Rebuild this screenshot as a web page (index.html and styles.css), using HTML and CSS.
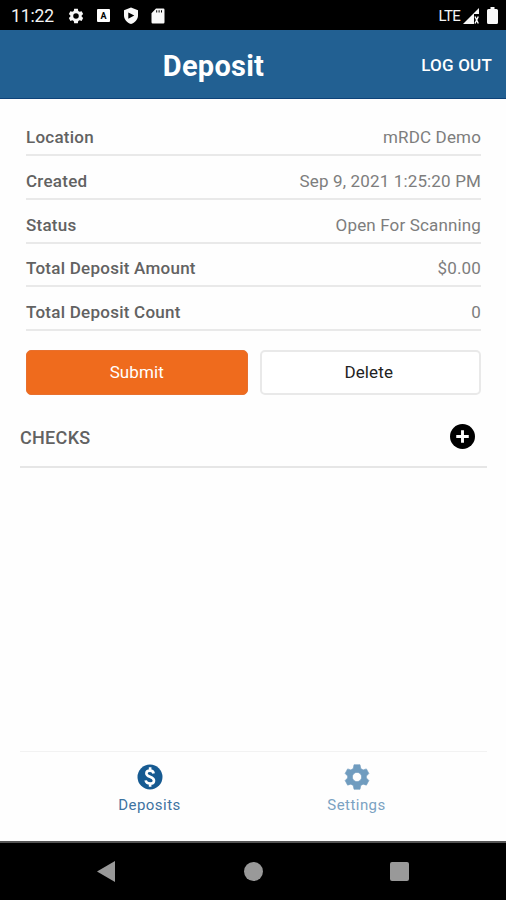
FILE: index.html
```html
<!DOCTYPE html>
<html lang="en">
<head>
<meta charset="utf-8">
<title>Deposit</title>
<link rel="stylesheet" href="styles.css">
</head>
<body>
<svg class="defs" width="0" height="0" aria-hidden="true">
  <symbol id="gear" viewBox="0 0 24 24"><path fill-rule="evenodd" d="M9.600 2.200H14.400L15 5.200 16.900 6.300 19.500 5.500 21.500 9.200 19.500 11.200V12.800L21.500 14.800 19.500 18.500 16.900 17.700 15 18.800 14.400 21.800H9.600L9 18.800 7.100 17.700 4.500 18.500 2.500 14.800 4.500 12.800V11.200L2.500 9.200 4.500 5.500 7.100 6.300 9 5.200ZM12 8.300a3.700 3.700 0 1 0 0 7.400 3.700 3.700 0 1 0 0-7.400Z" stroke-width=".5" stroke-linejoin="round"/></symbol>
</svg>
<div class="screen">
  <div class="status">
    <span class="time">11:22</span>
    <svg class="s-gear"><use href="#gear"/></svg>
    <svg class="s-a" viewBox="0 0 13 13"><rect width="13" height="13" rx="1" fill="#fff"/><text x="6.500" y="9.800" text-anchor="middle" class="a-letter">A</text></svg>
    <svg class="s-shield" viewBox="0 0 16 18"><path fill-rule="evenodd" d="M8 0.500 15 3.300V8.500C15 12.500 12 15.700 8 17 4 15.700 1 12.500 1 8.500V3.300ZM5.300 5.500V11.700L11.300 8.600Z"/></svg>
    <svg class="s-card" viewBox="0 0 14 16"><path fill-rule="evenodd" d="M5 .5H12.300Q13.500.5 13.500 1.700V14.300Q13.500 15.500 12.300 15.500H1.700Q.5 15.500.5 14.300V5.200ZM5.200 2.300V4.600H6.200V2.300ZM7.600 2.300V4.600H8.600V2.300ZM10 2.300V4.600H11V2.300Z"/></svg>
    <span class="lte">LTE</span>
    <svg class="s-signal" viewBox="0 0 16 16"><path d="M0 16 16 0V6H11V16Z"/><path d="M12 8.500 15.300 15.500M15.300 8.500 12 15.500" stroke="#fff" stroke-width="1.400"/></svg>
    <svg class="s-battery" viewBox="0 0 11 17"><path d="M3.500 0H7.500V2H9.500Q11 2 11 3.500V15.500Q11 17 9.500 17H1.500Q0 17 0 15.500V3.500Q0 2 1.500 2H3.500Z"/></svg>
  </div>
  <header class="bar">
    <h1 class="title">Deposit</h1>
    <span class="logout">LOG OUT</span>
  </header>
  <main class="main">
    <dl class="details">
      <div class="row"><dt>Location</dt><dd>mRDC Demo</dd></div>
      <div class="row"><dt>Created</dt><dd>Sep 9, 2021 1:25:20 PM</dd></div>
      <div class="row"><dt>Status</dt><dd>Open For Scanning</dd></div>
      <div class="row"><dt>Total Deposit Amount</dt><dd>$0.00</dd></div>
      <div class="row"><dt>Total Deposit Count</dt><dd>0</dd></div>
    </dl>
    <div class="actions">
      <button class="btn submit">Submit</button>
      <button class="btn delete">Delete</button>
    </div>
    <section class="checks">
      <h2>CHECKS</h2>
      <svg class="add" viewBox="0 0 24 24"><circle cx="12" cy="12" r="12"/><path d="M12 6V18M6 12H18" stroke="#fff" stroke-width="2.800"/></svg>
    </section>
  </main>
  <nav class="tabs">
    <div class="tab active"><svg viewBox="0 0 24 24"><circle cx="12" cy="12" r="10" stroke="none"/><path d="M14.900 9.200C14.700 7.600 13.700 6.900 12.100 6.900 10.300 6.900 9.100 7.800 9.100 9.100 9.100 12.400 15.200 11.100 15.200 14.900 15.200 16.300 14 17.200 12.100 17.200 10.100 17.200 8.800 16.300 8.500 14.700M12.100 4.200V7M12.100 17V19.800" fill="none" stroke="#fff" stroke-width="2.100"/></svg><span>Deposits</span></div>
    <div class="tab"><svg><use href="#gear"/></svg><span>Settings</span></div>
  </nav>
  <div class="system">
    <svg class="back" viewBox="0 0 18 21"><path d="M0 10.500 18 0V21Z"/></svg>
    <span class="home"></span>
    <span class="recent"></span>
  </div>
</div>
</body>
</html>
```
FILE: styles.css
```css
* { box-sizing: border-box; }
body { margin: 0; background: #fff; font-family: Roboto, "Liberation Sans", sans-serif; }
svg { display: block; flex: none; }
.defs { position: absolute; }
.screen { width: 506px; height: 900px; display: flex; flex-direction: column; overflow: hidden; background: #fefefe; }

.status { height: 30px; flex: none; display: flex; align-items: center; background: #000; color: #f4f4f4; fill: #f8f8f8; padding: 1px 8px 0 11px; }
.time { width: 56px; font-size: 17.500px; letter-spacing: -0.100px; line-height: 30px; }
.s-gear { width: 18px; height: 18px; }
.s-a { width: 13px; height: 13px; margin-left: 12px; }
.a-letter { font: 700 9px Roboto, sans-serif; fill: #000; }
.s-shield { width: 16px; height: 18px; margin-left: 13px; }
.s-card { width: 14px; height: 16px; margin-left: 12px; }
.lte { margin-left: auto; font-size: 15px; letter-spacing: -0.7px; margin-right: 3px; }
.s-signal { width: 16px; height: 16px; margin-right: 8px; }
.s-battery { width: 11px; height: 17px; }

.bar { height: 69px; flex: none; display: grid; grid-template-columns: 1fr auto 1fr; align-items: center; background: #226092; border-bottom: 1px solid #0e4379; color: #fff; padding: 2px 14px 0; }
.title { grid-column: 2; margin: 2px 0 0 -79px; font-size: 29px; font-weight: 700; line-height: 34px; letter-spacing: 0.250px; }
.logout { justify-self: end; font-size: 17px; font-weight: 500; line-height: 20px; letter-spacing: 0.200px; }

.main { flex: 1; padding: 13.700px 19px 0 20px; }
.details { margin: 0 6px; }
.row { height: 43.700px; display: flex; justify-content: space-between; border-bottom: 2px solid #e9e9e9; padding-top: 14.500px; font-size: 17px; line-height: 20px; }
.row dt { font-weight: 500; color: #626262; letter-spacing: 0.250px; }
.row dd { margin: 0; color: #7d7d7d; letter-spacing: 0.150px; }
.actions { display: grid; grid-template-columns: 1fr 1fr; gap: 12px; margin: 18.500px 6px 0; }
.btn { height: 45px; padding: 0; border-radius: 5px; font: 400 17px/20px Roboto, sans-serif; letter-spacing: 0.100px; }
.submit { background: #ef6b1d; border: 1px solid #e8702e; color: #fff; }
.delete { background: #fff; border: 2px solid #e9e9e9; color: #222; padding-right: 3px; }
.checks { height: 73px; display: flex; align-items: center; justify-content: space-between; border-bottom: 2px solid #e6e6e6; padding: 13px 12px 0 0; }
.checks h2 { margin: 2px 0 0; font-size: 18px; font-weight: 500; line-height: 22px; letter-spacing: 0.300px; color: #626262; }
.add { width: 25px; height: 25px; }

.tabs { height: 90px; flex: none; margin: 0 19px 0 20px; display: grid; grid-template-columns: 259px 155px; border-top: 1px solid #f2f2f2; padding-top: 10px; }
.tab { display: flex; flex-direction: column; align-items: center; color: #7ba2c2; fill: #709cbf; stroke: #709cbf; font-size: 15px; letter-spacing: 0.450px; line-height: 18px; }
.tab svg { width: 30px; height: 30px; margin-bottom: 4px; }
.tab span { stroke: none; }
.active { color: #3e73a1; fill: #165a91; }

.system { height: 59px; flex: none; background: #000; border-top: 2px solid #555; display: grid; grid-template-columns: 180px 147px 144px; align-items: center; justify-items: center; fill: #999; }
.back { width: 18px; height: 21px; margin-left: 32px; }
.home { width: 19px; height: 19px; border-radius: 50%; background: #999; }
.recent { width: 19px; height: 19px; border-radius: 2px; background: #999; }
```
